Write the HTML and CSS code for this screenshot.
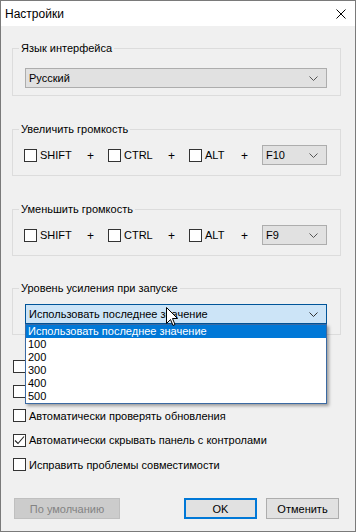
FILE: index.html
```html
<!DOCTYPE html>
<html lang="ru">
<head>
    <meta charset="UTF-8">
    <title>Настройки</title>
    <link rel="stylesheet" href="styles.css">
</head>
<body>
    <div class="window">
        <div class="titlebar">
            <span class="title">Настройки</span>
            <svg class="close" width="10" height="10" viewBox="0 0 10 10">
                <path d="M0.5 0.5 L9.5 9.5 M9.5 0.5 L0.5 9.5" stroke="#000" stroke-width="1" fill="none"/>
            </svg>
        </div>

        <div class="content">
            <fieldset class="group group--lang">
                <legend>Язык интерфейса</legend>
                <div class="combo combo--wide">
                    <span>Русский</span>
                    <svg class="chevron" width="9" height="5" viewBox="0 0 9 5"><path d="M0.5 0.5 L4.5 4.5 L8.5 0.5" stroke="#555" fill="none"/></svg>
                </div>
            </fieldset>

            <fieldset class="group">
                <legend>Увеличить громкость</legend>
                <div class="hotkey">
                    <label class="key key--shift"><span class="check"></span>SHIFT</label>
                    <span class="plus">+</span>
                    <label class="key key--ctrl"><span class="check"></span>CTRL</label>
                    <span class="plus">+</span>
                    <label class="key key--alt"><span class="check"></span>ALT</label>
                    <span class="plus">+</span>
                    <div class="combo combo--key">
                        <span>F10</span>
                        <svg class="chevron" width="9" height="5" viewBox="0 0 9 5"><path d="M0.5 0.5 L4.5 4.5 L8.5 0.5" stroke="#555" fill="none"/></svg>
                    </div>
                </div>
            </fieldset>

            <fieldset class="group">
                <legend>Уменьшить громкость</legend>
                <div class="hotkey">
                    <label class="key key--shift"><span class="check"></span>SHIFT</label>
                    <span class="plus">+</span>
                    <label class="key key--ctrl"><span class="check"></span>CTRL</label>
                    <span class="plus">+</span>
                    <label class="key key--alt"><span class="check"></span>ALT</label>
                    <span class="plus">+</span>
                    <div class="combo combo--key">
                        <span>F9</span>
                        <svg class="chevron" width="9" height="5" viewBox="0 0 9 5"><path d="M0.5 0.5 L4.5 4.5 L8.5 0.5" stroke="#555" fill="none"/></svg>
                    </div>
                </div>
            </fieldset>

            <fieldset class="group group--boost">
                <legend>Уровень усиления при запуске</legend>
                <div class="combo-wrap">
                    <div class="combo combo--wide combo--open">
                        <span>Использовать последнее значение</span>
                        <svg class="chevron" width="9" height="5" viewBox="0 0 9 5"><path d="M0.5 0.5 L4.5 4.5 L8.5 0.5" stroke="#333" fill="none"/></svg>
                    </div>
                    <ul class="droplist">
                        <li class="selected">Использовать последнее значение</li>
                        <li>100</li>
                        <li>200</li>
                        <li>300</li>
                        <li>400</li>
                        <li>500</li>
                    </ul>
                    <!-- mouse pointer -->
                    <svg class="cursor" width="12" height="20" viewBox="0 0 12 20">
                        <path d="M0.5 0.5 L0.5 16.5 L4.5 12.5 L7 18.5 L9 17.5 L6.5 11.5 L11.5 11.5 Z" fill="#fff" stroke="#000" stroke-width="1"/>
                    </svg>
                </div>
            </fieldset>

            <div class="options">
                <!-- the first two rows sit under the open list -->
                <label class="option"><span class="check"></span></label>
                <label class="option"><span class="check"></span></label>
                <label class="option"><span class="check"></span>Автоматически проверять обновления</label>
                <label class="option">
                    <span class="check check--on">
                        <svg width="11" height="11" viewBox="0 0 11 11"><path d="M1 5.5 L4 8.5 L10 1.5" stroke="#222" stroke-width="1.1" fill="none"/></svg>
                    </span>Автоматически скрывать панель с контролами</label>
                <label class="option"><span class="check"></span>Исправить проблемы совместимости</label>
            </div>

            <div class="buttons">
                <button class="btn btn--disabled" disabled>По умолчанию</button>
                <div class="buttons-right">
                    <button class="btn btn--default">OK</button>
                    <button class="btn">Отменить</button>
                </div>
            </div>
        </div>
    </div>
</body>
</html>
```

FILE: styles.css
```css
:root {
    --ui-font: 'Liberation Sans', Arial, sans-serif;
    --face: #f0f0f0;
    --btn-bg: #e1e1e1;
    --btn-border: #adadad;
    --accent: #0078d7;
}

* {
    box-sizing: border-box;
}

body {
    margin: 0;
    font-family: var(--ui-font);
    font-size: 11px;
    color: #000;
}

.window {
    width: 356px;
    height: 532px;
    border: 1px solid #7a7a7a;
    background-color: var(--face);
    display: flex;
    flex-direction: column;
}

.titlebar {
    height: 25px;
    background-color: #fff;
    display: flex;
    align-items: center;
    justify-content: space-between;
    padding: 0 9px 0 4px;
    flex-shrink: 0;
}

.title {
    font-size: 12px;
}

.close {
    display: block;
    margin-top: 1px;
}

.content {
    display: flex;
    flex-direction: column;
    gap: 25px;
    padding: 14px 14px 0 11px;
}

/* group boxes */
.group {
    margin: 0;
    border: 1px solid #dcdcdc;
    padding: 8px 13px 10px 12px;
    min-width: 0;
}

.group legend {
    padding: 0 2px;
    margin-left: -6px;
    line-height: 16px;
    color: #000;
}

.group--lang {
    padding-top: 12px;
    padding-bottom: 7px;
}

.group--boost {
    margin-top: -1px;
}

/* combo boxes */
.combo {
    height: 20px;
    border: 1px solid var(--btn-border);
    background-color: var(--btn-bg);
    display: flex;
    align-items: center;
    justify-content: space-between;
    padding: 0 8px 0 3px;
    line-height: 16px;
}

.combo--wide {
    width: 302px;
}

.combo--key {
    width: 65px;
}

.combo--open {
    background-color: #cce4f7;
    border-color: #005499;
}

.chevron {
    display: block;
    margin-top: 1px;
}

.combo-wrap {
    position: relative;
}

.droplist {
    position: absolute;
    top: 20px;
    left: 0;
    width: 302px;
    margin: 0;
    padding: 0;
    list-style: none;
    background-color: #fff;
    border: 1px solid #3b6aa3;
    box-shadow: 2px 2px 3px rgba(0, 0, 0, 0.35);
    z-index: 2;
}

.droplist li {
    height: 13px;
    line-height: 13px;
    padding-left: 2px;
}

.droplist li.selected {
    background-color: var(--accent);
    color: #fff;
}

.cursor {
    position: absolute;
    left: 141px;
    top: 3px;
    z-index: 3;
}

/* hotkey rows */
.hotkey {
    display: flex;
    align-items: center;
    margin-left: -1px;
    height: 20px;
}

.key {
    display: flex;
    align-items: center;
    gap: 3px;
}

.key--shift {
    width: 57px;
}

.key--ctrl {
    width: 54px;
}

.key--alt {
    width: 46px;
}

.plus {
    width: 27px;
    padding-left: 6px;
    margin-top: 2px;
    font-size: 12px;
}

.check {
    width: 13px;
    height: 13px;
    border: 1px solid #333;
    background-color: #fff;
    flex-shrink: 0;
    display: flex;
    align-items: center;
    justify-content: center;
}

.check svg {
    display: block;
}

/* option checkboxes */
.options {
    display: flex;
    flex-direction: column;
    gap: 11.5px;
    margin-left: 1px;
}

.option {
    display: flex;
    align-items: center;
    gap: 3px;
    height: 13px;
}

/* dialog buttons */
.buttons {
    display: flex;
    justify-content: space-between;
    margin-top: 2px;
    padding: 0 2px 0 2px;
}

.buttons-right {
    display: flex;
    gap: 9px;
}

.btn {
    height: 21px;
    width: 73px;
    font-family: var(--ui-font);
    font-size: 11px;
    color: #000;
    background-color: var(--btn-bg);
    border: 1px solid var(--btn-border);
    padding: 0;
}

.btn--default {
    border-color: var(--accent);
    box-shadow: inset 0 0 0 1px var(--accent);
}

.btn--disabled {
    width: 106px;
    background-color: #cccccc;
    border-color: #bfbfbf;
    color: #838383;
}
```
